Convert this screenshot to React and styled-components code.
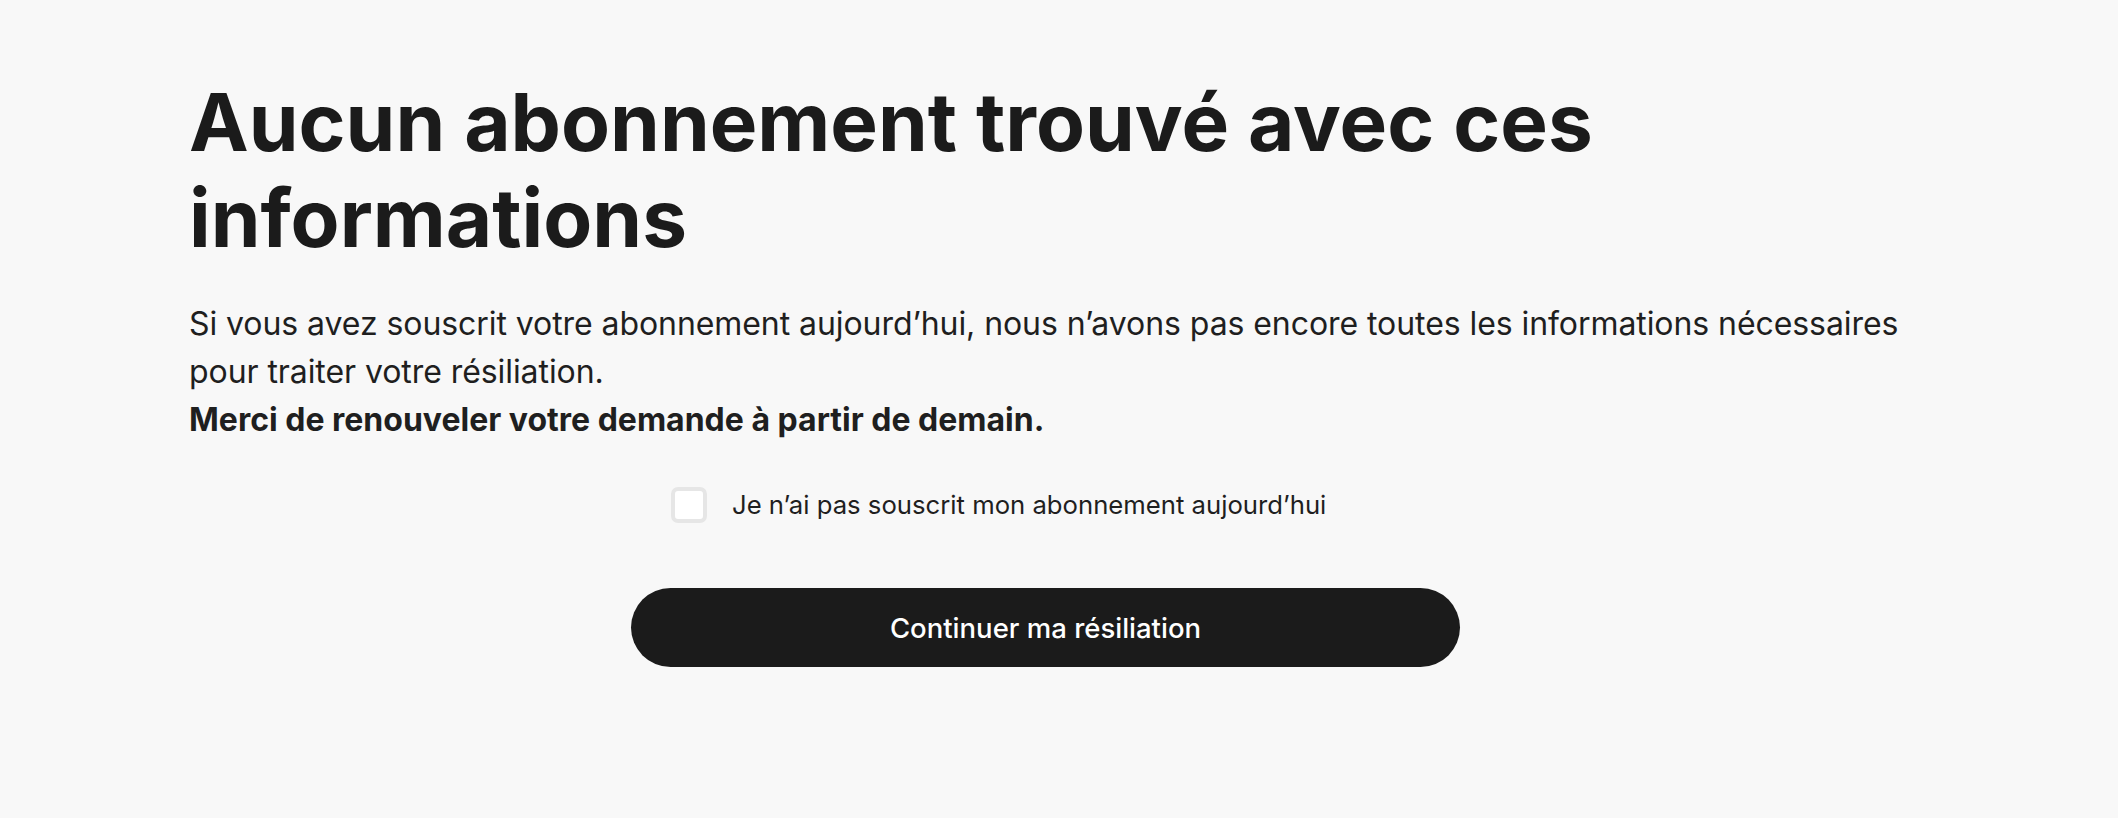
import React, { useState } from 'react';
import styled, { createGlobalStyle } from 'styled-components';

const GlobalStyle = createGlobalStyle`
  html, body {
    margin: 0;
    padding: 0;
    background: #f8f8f8;
  }
  body {
    font-family: Inter, "Noto Sans", "Liberation Sans", sans-serif;
    color: #1b1b1b;
  }
`;

const Page = styled.main`
  min-height: 818px;
  background: #f8f8f8;
  padding: 74px 0 0 189px;
  box-sizing: border-box;
`;

const Column = styled.section`
  display: flex;
  flex-direction: column;
`;

const Title = styled.h1`
  margin: 0;
  font-size: 80px;
  line-height: 96px;
  font-weight: 700;
  color: #1b1b1b;
  max-width: 1500px;
`;

const Text = styled.p`
  margin: 34px 0 0;
  max-width: 1740px;
  font-size: 32px;
  line-height: 48px;
  letter-spacing: -0.07px;
  font-weight: 400;
  color: #1f1f1f;

  strong {
    letter-spacing: 0;
    font-weight: 700;
  }
`;

const Form = styled.form`
  width: 829px;
  margin: 43px 0 0 442px;
  display: flex;
  flex-direction: column;
`;

const CheckRow = styled.label`
  display: flex;
  align-items: center;
  gap: 25px;
  padding-left: 40px;
  cursor: pointer;
  font-size: 25.7px;
  line-height: 36px;
  color: #1f1f1f;
`;

const Box = styled.span`
  width: 36px;
  height: 36px;
  box-sizing: border-box;
  border: 4px solid #e6e6e6;
  border-radius: 7px;
  background: #ffffff;
  display: flex;
  align-items: center;
  justify-content: center;
  flex-shrink: 0;
`;

const Button = styled.button`
  margin-top: 65px;
  width: 829px;
  height: 79px;
  border: none;
  border-radius: 40px;
  background: #1b1b1b;
  color: #ffffff;
  font-family: inherit;
  font-size: 27.5px;
  font-weight: 500;
  cursor: pointer;
`;

export default function App() {
  const [checked, setChecked] = useState(false);

  return (
    <Page>
      <GlobalStyle />
      <Column>
        <Title>Aucun abonnement trouvé avec ces informations</Title>
        <Text>
          Si vous avez souscrit votre abonnement aujourd’hui, nous n’avons pas encore toutes les informations nécessaires pour traiter votre résiliation.
          <br />
          <strong>Merci de renouveler votre demande à partir de demain.</strong>
        </Text>
        <Form onSubmit={(e) => e.preventDefault()}>
          <CheckRow onClick={() => setChecked(!checked)}>
            <Box>
              {checked && (
                <svg width="20" height="20" viewBox="0 0 24 24" fill="none" stroke="#1b1b1b" strokeWidth="3">
                  <path d="M5 12l5 5L19 7" />
                </svg>
              )}
            </Box>
            Je n’ai pas souscrit mon abonnement aujourd’hui
          </CheckRow>
          <Button type="submit">Continuer ma résiliation</Button>
        </Form>
      </Column>
    </Page>
  );
}
